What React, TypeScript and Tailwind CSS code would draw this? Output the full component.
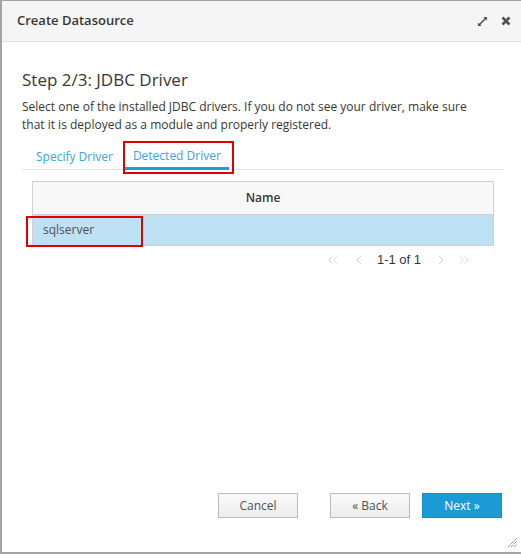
import React, { useState } from 'react';
import { ChevronsLeft, ChevronLeft, ChevronRight, ChevronsRight } from 'lucide-react';

const drivers = ['sqlserver'];

function ExpandIcon() {
  return (
    <svg width="11" height="11" viewBox="0 0 12 12" className="text-[#4d5258]">
      <path d="M7 1h4v4L9.6 3.6 3.6 9.6 5 11H1V7l1.4 1.4 6-6z" fill="currentColor" />
    </svg>
  );
}

function CloseIcon() {
  return (
    <svg width="10" height="10" viewBox="0 0 10 10" className="text-[#4d5258]">
      <path d="M1.5 1.5l7 7M8.5 1.5l-7 7" stroke="currentColor" strokeWidth="2.6" />
    </svg>
  );
}

export default function App() {
  const [tab, setTab] = useState<'specify' | 'detected'>('detected');
  const [selected, setSelected] = useState('sqlserver');

  return (
    <div className="w-[521px] h-[554px] bg-white border-l-2 border-t border-b-2 border-[#a3a3a3] flex flex-col font-['Open_Sans',sans-serif] text-[#363636] relative overflow-hidden">
      <div className="h-[41px] shrink-0 bg-[#f5f5f5] border-b border-[#e2e2e2] flex items-center justify-between pl-[15px] pr-[10px]">
        <h1 className="text-[13px] font-semibold text-[#363636]">Create Datasource</h1>
        <div className="flex items-center gap-[13px]">
          <ExpandIcon />
          <CloseIcon />
        </div>
      </div>

      <div className="flex-1 px-5 pt-[27px]">
        <h2 className="text-[17px] leading-[22px]">Step 2/3: JDBC Driver</h2>
        <p className="mt-[7px] text-[12px] leading-[18px] pr-[10px]">
          Select one of the installed JDBC drivers. If you do not see your driver, make sure that it is deployed as a module and properly registered.
        </p>

        <div className="mt-[7px] -mr-[3px] flex border-b border-[#e5e5e5] text-[12px] h-[29px] relative">
          <button
            onClick={() => setTab('specify')}
            className={`px-[14px] pt-[3px] text-[#39a5dc] ${tab === 'specify' ? 'border-b-[3px] border-[#1f9bd8] -mb-px' : ''}`}
          >
            Specify Driver
          </button>
          <button
            onClick={() => setTab('detected')}
            className={`-ml-[2px] px-[8px] pt-[3px] text-[#39a5dc] ${tab === 'detected' ? 'border-b-[3px] border-[#1f9bd8] -mb-px' : ''}`}
          >
            Detected Driver
          </button>
          <div className="absolute left-[101px] top-0 w-[111px] h-[33px] border-2 border-[#e00000] pointer-events-none" />
        </div>

        <div className="mt-[11px] ml-[10px] mr-[7px] relative">
          <table className="w-full border-collapse text-[12px]">
            <thead>
              <tr className="h-[33px] bg-[#f8f8f8]">
                <th className="border border-[#d1d1d1] font-semibold text-center">Name</th>
              </tr>
            </thead>
            <tbody>
              {drivers.map(d => (
                <tr
                  key={d}
                  onClick={() => setSelected(d)}
                  className={`h-[31px] ${selected === d ? 'bg-[#bee1f4]' : 'bg-white'}`}
                >
                  <td className="border border-[#d1d1d1] pl-[10px] text-[#4d5258]">{d}</td>
                </tr>
              ))}
            </tbody>
          </table>
          <div className="absolute -left-[6px] top-[35px] w-[117px] h-[31px] border-2 border-[#e00000] pointer-events-none" />

          <div className="flex items-center justify-end mt-[2px] pr-[22px] text-[#cfcfcf] h-[24px]">
            <ChevronsLeft size={16} strokeWidth={1.2} className="mr-[10px]" />
            <ChevronLeft size={16} strokeWidth={1.2} className="mr-[10px]" />
            <span className="text-[13px] font-['Liberation_Sans',sans-serif] text-[#363636]">1-1 of 1</span>
            <ChevronRight size={16} strokeWidth={1.2} className="ml-[12px]" />
            <ChevronsRight size={16} strokeWidth={1.2} className="ml-[7px]" />
          </div>
        </div>
      </div>

      <div className="flex justify-end pr-[19px] pb-[34px] text-[12px]">
        <button className="w-[80px] h-[25px] border border-[#bbb] bg-gradient-to-b from-[#fafafa] to-[#ededed] text-[#4d5258]">Cancel</button>
        <button className="ml-[32px] w-[80px] h-[25px] border border-[#bbb] bg-gradient-to-b from-[#fafafa] to-[#ededed] text-[#4d5258]">« Back</button>
        <button className="ml-[12px] w-[80px] h-[25px] border border-[#1a8cc4] bg-[#1a9bd6] text-white">Next »</button>
      </div>

      <svg width="11" height="11" viewBox="0 0 11 11" className="absolute right-[3px] bottom-[4px] text-[#555]">
        <path d="M1 10L10 1M4 10L10 4M7 10L10 7" stroke="currentColor" strokeWidth="1" strokeDasharray="1 1" />
      </svg>
    </div>
  );
}
